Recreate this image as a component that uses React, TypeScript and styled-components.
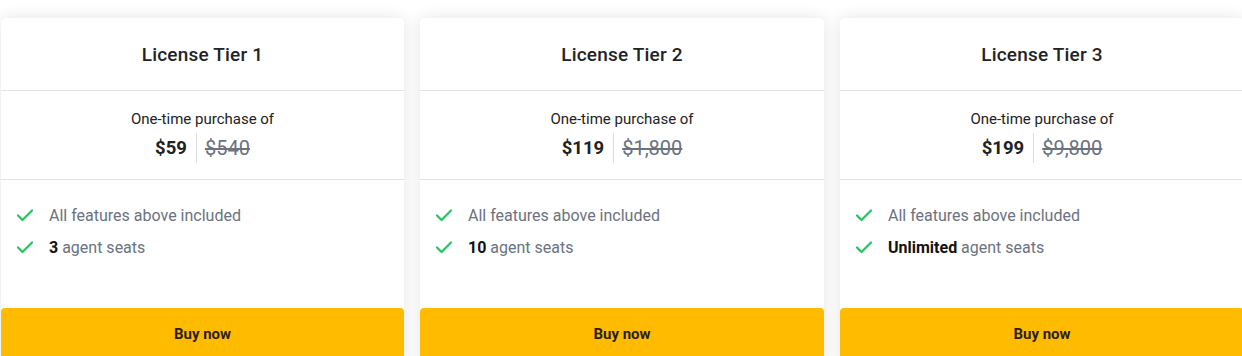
import React from "react";
import styled, { createGlobalStyle } from "styled-components";

const Global = createGlobalStyle`
  html, body { margin: 0; padding: 0; background: #ffffff; }
  body { font-family: Roboto, "Liberation Sans", Arial, sans-serif; overflow: hidden; }
  * { box-sizing: border-box; }
`;

const Page = styled.div`
  height: 356px;
  overflow: hidden;
`;

const Row = styled.div`
  display: grid;
  grid-template-columns: 403px 404px 404px;
  gap: 16px;
  padding: 18px 0 0 1px;
  width: 1262px;
`;

const Card = styled.div`
  background: #fff;
  border-radius: 5px;
  box-shadow: 0 0 16px rgba(0, 0, 0, 0.11);
  display: flex;
  flex-direction: column;
  overflow: hidden;
  height: 350px;
`;

const Header = styled.div`
  height: 73px;
  display: flex;
  align-items: center;
  justify-content: center;
  border-bottom: 1px solid #e3e3e3;
`;

const Title = styled.h3`
  margin: 0;
  font-family: Roboto, "Liberation Sans", sans-serif;
  font-weight: 500;
  font-size: 19px;
  color: #232326;
  letter-spacing: 0.2px;
`;

const PriceBlock = styled.div`
  height: 89px;
  border-bottom: 1px solid #e3e3e3;
  display: flex;
  flex-direction: column;
  align-items: center;
  padding-top: 19px;
`;

const Caption = styled.div`
  font-size: 15px;
  line-height: 18px;
  color: #222;
`;

const Prices = styled.div`
  display: flex;
  align-items: center;
  margin-top: 5px;
  height: 30px;
`;

const Price = styled.span`
  font-size: 18.5px;
  font-weight: 700;
  color: #222;
  padding-right: 9px;
`;

const Divider = styled.span`
  width: 1px;
  align-self: stretch;
  background: #dcdcdc;
`;

const OldPrice = styled.span`
  font-size: 20px;
  color: #6b7280;
  text-decoration: line-through;
  text-decoration-thickness: 1.5px;
  padding-left: 8px;
`;

const Features = styled.ul`
  list-style: none;
  margin: 0;
  padding: 19px 0 0 15px;
  height: 128px;
`;

const Feature = styled.li`
  display: flex;
  align-items: center;
  height: 32px;
  gap: 15px;
  font-size: 16px;
  color: #6b7280;
`;

const Strong = styled.b`
  color: #111;
  font-weight: 700;
`;

const Button = styled.button`
  border: none;
  background: #ffbb00;
  height: 52px;
  width: 100%;
  font-family: Roboto, "Liberation Sans", sans-serif;
  font-weight: 700;
  font-size: 15px;
  color: #2b1d1d;
  border-radius: 4px 4px 0 0;
  padding: 0;
  cursor: pointer;
`;

const Check = () => (
  <svg width="18" height="18" viewBox="0 0 18 18" fill="none" stroke="#22c55e" strokeWidth="2.2" strokeLinecap="round" strokeLinejoin="round">
    <path d="M2 9.5l4.5 4.5L16 4.5" />
  </svg>
);

const tiers = [
  { n: 1, price: "$59", old: "$540", seats: "3" },
  { n: 2, price: "$119", old: "$1,800", seats: "10" },
  { n: 3, price: "$199", old: "$9,800", seats: "Unlimited" },
];

export default function App() {
  return (
    <Page>
      <Global />
      <Row>
        {tiers.map((t) => (
          <Card key={t.n}>
            <Header>
              <Title>License Tier {t.n}</Title>
            </Header>
            <PriceBlock>
              <Caption>One-time purchase of</Caption>
              <Prices>
                <Price>{t.price}</Price>
                <Divider />
                <OldPrice>{t.old}</OldPrice>
              </Prices>
            </PriceBlock>
            <Features>
              <Feature>
                <Check />
                <span>All features above included</span>
              </Feature>
              <Feature>
                <Check />
                <span>
                  <Strong>{t.seats}</Strong> agent seats
                </span>
              </Feature>
            </Features>
            <Button>Buy now</Button>
          </Card>
        ))}
      </Row>
    </Page>
  );
}
